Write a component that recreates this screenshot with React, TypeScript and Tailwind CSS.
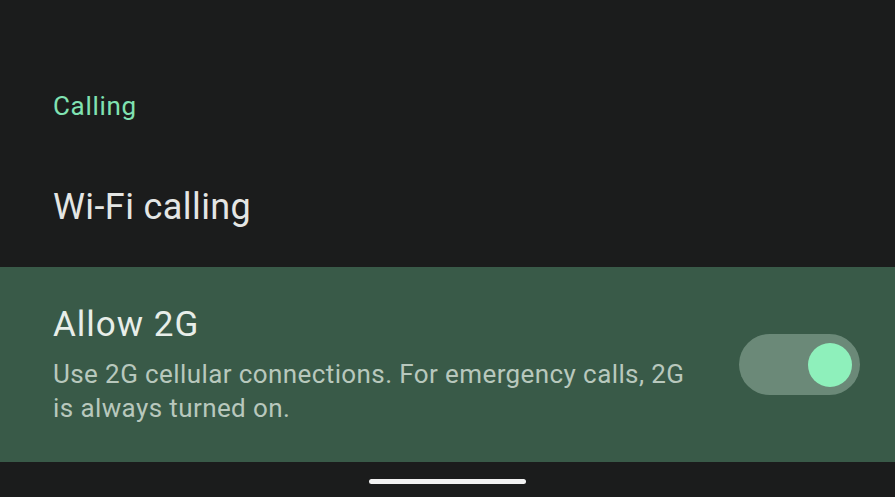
export default function App() {
  return (
    <div className="flex h-[497px] w-[895px] flex-col overflow-hidden bg-[#1b1c1c] font-['Roboto',sans-serif]">
      <div className="pl-[53px] pt-[90px] text-[26px] leading-[32px] tracking-[0.7px] text-[#80e2b2]">
        Calling
      </div>
      <div className="h-[145px] pl-[53px] pt-[63px]">
        <span className="text-[36px] leading-[44px] tracking-[0.4px] text-[#e4e6e4]">Wi-Fi calling</span>
      </div>
      <div className="flex h-[195px] items-center bg-[#395a48] pl-[53px] pr-[35px]">
        <div className="flex-1">
          <div className="text-[35px] leading-[42px] tracking-[1px] text-[#e8eee9]">Allow 2G</div>
          <div className="mt-[11px] w-[648px] text-[26px] leading-[34px] tracking-[0.4px] text-[#b8c8bd]">
            Use 2G cellular connections. For emergency calls, 2G is always turned on.
          </div>
        </div>
        <div className="flex h-[61px] w-[121px] items-center justify-end rounded-full bg-[#6b8978] pr-[8px]">
          <div className="h-[44px] w-[44px] rounded-full bg-[#8ef0bb]" />
        </div>
      </div>
      <div className="flex flex-1 justify-center pt-[17px]">
        <div className="h-[5px] w-[157px] rounded-full bg-[#f1f1f1]" />
      </div>
    </div>
  );
}
